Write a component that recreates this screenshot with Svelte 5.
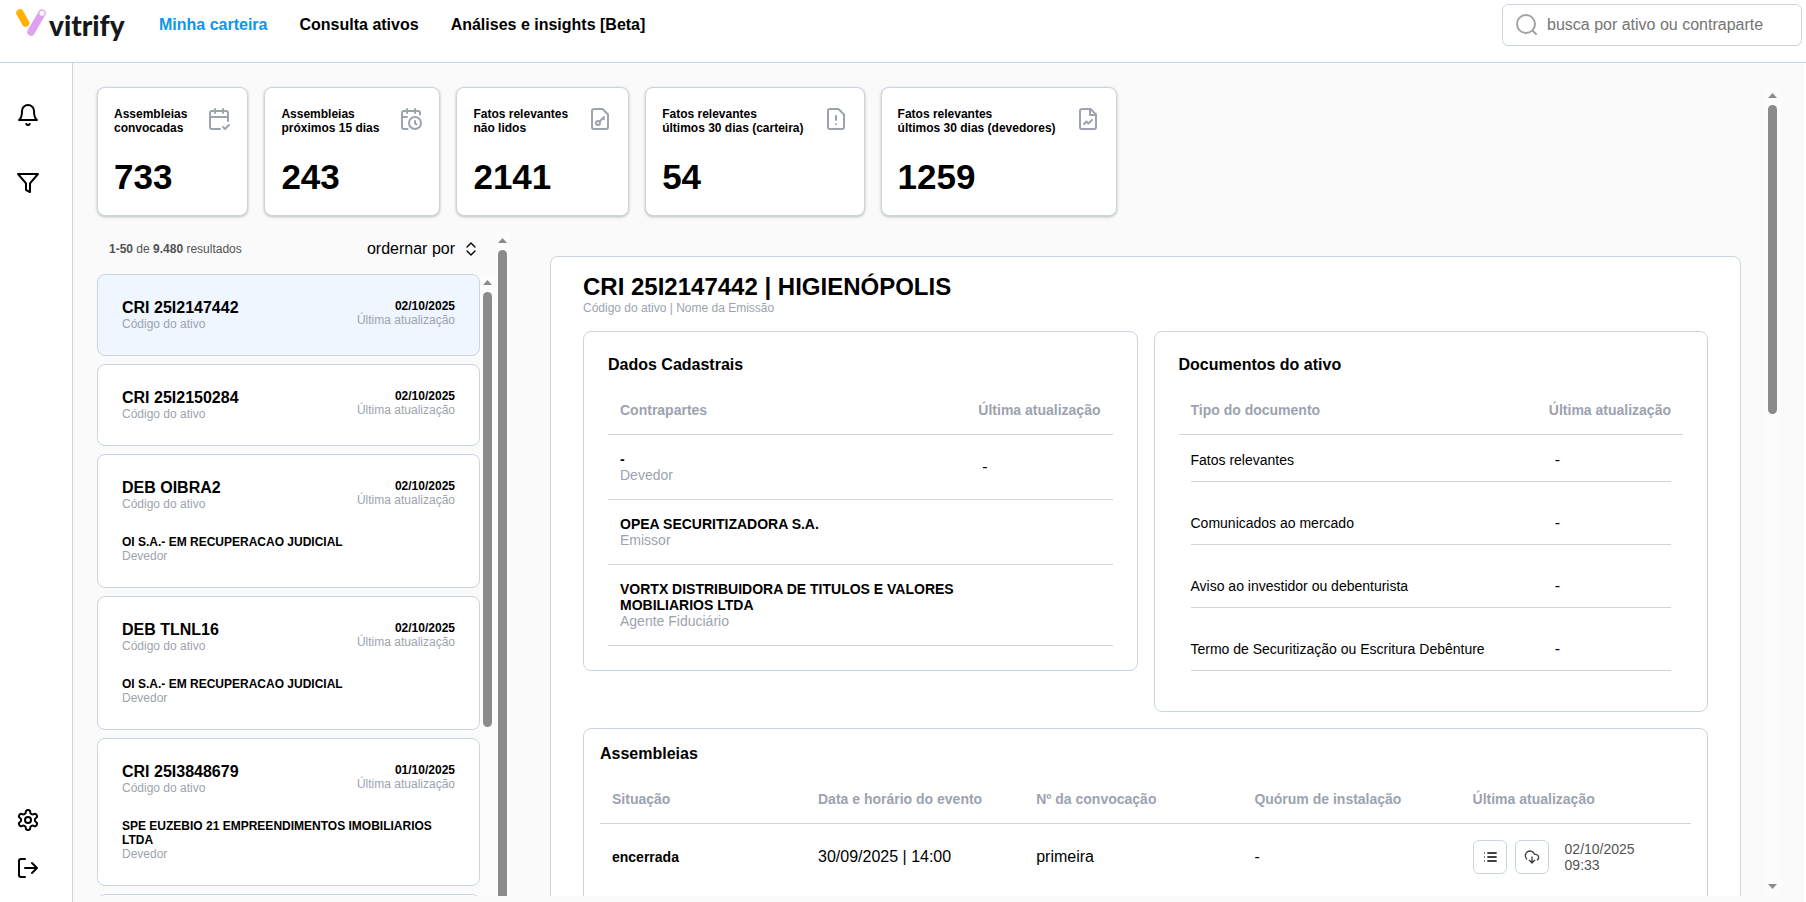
<script>
  const stats = [
    { icon: 'check', top: 'Assembleias', bottom: 'convocadas', value: '733' },
    { icon: 'clock', top: 'Assembleias', bottom: 'próximos 15 dias', value: '243' },
    { icon: 'key', top: 'Fatos relevantes', bottom: 'não lidos', value: '2141' },
    { icon: 'warning', top: 'Fatos relevantes', bottom: 'últimos 30 dias (carteira)', value: '54' },
    { icon: 'chart', top: 'Fatos relevantes', bottom: 'últimos 30 dias (devedores)', value: '1259' }
  ];

  const assets = [
    { code: 'CRI 25I2147442', date: '02/10/2025' },
    { code: 'CRI 25I2150284', date: '02/10/2025' },
    { code: 'DEB OIBRA2', date: '02/10/2025', debtor: 'OI S.A.- EM RECUPERACAO JUDICIAL' },
    { code: 'DEB TLNL16', date: '02/10/2025', debtor: 'OI S.A.- EM RECUPERACAO JUDICIAL' },
    { code: 'CRI 25I3848679', date: '01/10/2025', debtor: 'SPE EUZEBIO 21 EMPREENDIMENTOS IMOBILIARIOS LTDA' }
  ];

  const parties = [
    { name: '-', role: 'Devedor', updated: '-' },
    { name: 'OPEA SECURITIZADORA S.A.', role: 'Emissor', updated: '' },
    { name: 'VORTX DISTRIBUIDORA DE TITULOS E VALORES MOBILIARIOS LTDA', role: 'Agente Fiduciário', updated: '' }
  ];

  const documents = [
    'Fatos relevantes',
    'Comunicados ao mercado',
    'Aviso ao investidor ou debenturista',
    'Termo de Securitização ou Escritura Debênture'
  ];

  let selected = $state(0);
</script>

{#snippet scrollbar(size, end = true)}
  <div class="scrollbar" aria-hidden="true">
    <svg class="arrow" viewBox="0 0 15 18"><path d="M3 11 7.500 6 12 11z" /></svg>
    <div class="rail"><div class="thumb" style="height: {size}%"></div></div>
    {#if end}
      <svg class="arrow" viewBox="0 0 15 18"><path d="M3 6 7.500 11 12 6z" /></svg>
    {/if}
  </div>
{/snippet}

<div class="app">
  <header class="topbar">
    <a class="logo" href="#inicio">
      <svg width="34" height="32" viewBox="0 0 34 32" aria-hidden="true">
        <path d="M5 4 10.500 14" stroke="#ffb000" stroke-width="7.500" stroke-linecap="round" />
        <path d="M16 23 27 4.200" stroke="#e0a0f0" stroke-width="7.500" stroke-linecap="round" />
        <circle cx="27" cy="4.200" r="2.500" fill="#fff" />
      </svg>
      <span>vitrify</span>
    </a>
    <nav>
      <a class="active" href="#carteira">Minha carteira</a>
      <a href="#consulta">Consulta ativos</a>
      <a href="#analises">Análises e insights [Beta]</a>
    </nav>
    <label class="search">
      <svg class="icon" viewBox="0 0 24 24" aria-hidden="true"><circle cx="11" cy="11" r="9" /><path d="m21 21-3.500-3.500" /></svg>
      <input type="search" placeholder="busca por ativo ou contraparte" aria-label="busca por ativo ou contraparte" />
    </label>
  </header>

  <div class="body">
    <aside class="sidebar">
      <div class="tools">
        <button aria-label="Notificações">
          <svg class="icon" viewBox="0 0 24 24"><path d="M6 8a6 6 0 0 1 12 0c0 7 3 9 3 9H3s3-2 3-9" /><path d="M10.300 21a1.940 1.940 0 0 0 3.400 0" /></svg>
        </button>
        <button aria-label="Filtros">
          <svg class="icon" viewBox="0 0 24 24"><path d="M22 3H2l8 9.460V19l4 2v-8.540z" /></svg>
        </button>
      </div>
      <div class="tools lower">
        <button aria-label="Configurações">
          <svg class="icon" viewBox="0 0 24 24"><path d="M12.220 2h-.440a2 2 0 0 0-2 2v.180a2 2 0 0 1-1 1.730l-.430.250a2 2 0 0 1-2 0l-.150-.080a2 2 0 0 0-2.730.730l-.220.380a2 2 0 0 0 .730 2.730l.150.100a2 2 0 0 1 1 1.720v.510a2 2 0 0 1-1 1.740l-.150.090a2 2 0 0 0-.730 2.730l.220.380a2 2 0 0 0 2.730.730l.150-.080a2 2 0 0 1 2 0l.430.250a2 2 0 0 1 1 1.730V20a2 2 0 0 0 2 2h.440a2 2 0 0 0 2-2v-.180a2 2 0 0 1 1-1.730l.430-.250a2 2 0 0 1 2 0l.150.080a2 2 0 0 0 2.730-.730l.220-.390a2 2 0 0 0-.730-2.730l-.150-.080a2 2 0 0 1-1-1.740v-.500a2 2 0 0 1 1-1.740l.150-.090a2 2 0 0 0 .730-2.730l-.220-.380a2 2 0 0 0-2.730-.730l-.150.080a2 2 0 0 1-2 0l-.430-.250a2 2 0 0 1-1-1.730V4a2 2 0 0 0-2-2z" /><circle cx="12" cy="12" r="3" /></svg>
        </button>
        <button aria-label="Sair">
          <svg class="icon" viewBox="0 0 24 24"><path d="M9 21H5a2 2 0 0 1-2-2V5a2 2 0 0 1 2-2h4M16 17l5-5-5-5M21 12H9" /></svg>
        </button>
      </div>
    </aside>

    <main>
      <div class="content">
        <section class="stats">
          {#each stats as stat}
            <article class="stat">
              <div class="stat-head">
                <h2>{stat.top}<br />{stat.bottom}</h2>
                <svg class="icon" viewBox="0 0 24 24" aria-hidden="true">
                  {#if stat.icon === 'check'}
                    <path d="M8 2v4M16 2v4M21 14V6a2 2 0 0 0-2-2H5a2 2 0 0 0-2 2v14a2 2 0 0 0 2 2h8M3 10h18M16 20l2 2 4-4" />
                  {:else if stat.icon === 'clock'}
                    <path d="M21 7.500V6a2 2 0 0 0-2-2H5a2 2 0 0 0-2 2v14a2 2 0 0 0 2 2h3.500M16 2v4M8 2v4M3 10h5M17.500 17.500 16 16.300V14" />
                    <circle cx="16" cy="16" r="6" />
                  {:else if stat.icon === 'chart'}
                    <path d="M14.500 2H6a2 2 0 0 0-2 2v16a2 2 0 0 0 2 2h12a2 2 0 0 0 2-2V7.500zM14 2v6h6M16 13l-3.500 3.500-2-2L8 17" />
                  {:else}
                    <path d="M14.500 2H6a2 2 0 0 0-2 2v16a2 2 0 0 0 2 2h12a2 2 0 0 0 2-2V7.500z" />
                    {#if stat.icon === 'key'}
                      <circle cx="10" cy="16" r="2" />
                      <path d="m16 10-4.500 4.500M15 11l1 1" />
                    {:else}
                      <path d="M12 9v4M12 17h.010" />
                    {/if}
                  {/if}
                </svg>
              </div>
              <p>{stat.value}</p>
            </article>
          {/each}
        </section>

        <div class="columns">
          <section class="list">
            <div class="list-main">
              <div class="list-head">
                <p><b>1-50</b> de <b>9.480</b> resultados</p>
                <button>
                  ordernar por
                  <svg class="icon small" viewBox="0 0 24 24" aria-hidden="true"><path d="m6 15 6 6 6-6M6 9l6-6 6 6" /></svg>
                </button>
              </div>
              <div class="list-body">
                <div class="items">
                  {#each assets as asset, i}
                    <button class="item" class:selected={selected === i} onclick={() => (selected = i)}>
                      <span class="item-top">
                        <span><strong class="code">{asset.code}</strong><small>Código do ativo</small></span>
                        <span class="when"><strong>{asset.date}</strong><small>Última atualização</small></span>
                      </span>
                      {#if asset.debtor}
                        <span><strong>{asset.debtor}</strong><small>Devedor</small></span>
                      {/if}
                    </button>
                  {/each}
                  <div class="item"></div>
                </div>
                {@render scrollbar(72, false)}
              </div>
            </div>
            {@render scrollbar(110, false)}
          </section>

          <section class="detail">
            <h1>CRI 25I2147442 | HIGIENÓPOLIS</h1>
            <small>Código do ativo | Nome da Emissão</small>

            <div class="panels">
              <section class="panel">
                <h3>Dados Cadastrais</h3>
                <table>
                  <thead>
                    <tr><th>Contrapartes</th><th class="fit">Última atualização</th></tr>
                  </thead>
                  <tbody>
                    {#each parties as party}
                      <tr class="party">
                        <td><strong>{party.name}</strong><span>{party.role}</span></td>
                        <td class="dash">{party.updated}</td>
                      </tr>
                    {/each}
                  </tbody>
                </table>
              </section>

              <section class="panel">
                <h3>Documentos do ativo</h3>
                <table>
                  <thead>
                    <tr><th>Tipo do documento</th><th class="fit">Última atualização</th></tr>
                  </thead>
                  <tbody>
                    {#each documents as name}
                      <tr class="doc">
                        <td><div>{name}</div></td>
                        <td><div>-</div></td>
                      </tr>
                    {/each}
                  </tbody>
                </table>
              </section>
            </div>

            <section class="panel meetings">
              <h3>Assembleias</h3>
              <table>
                <colgroup><col class="first" /><col /><col /><col /><col class="last" /></colgroup>
                <thead>
                  <tr><th>Situação</th><th>Data e horário do evento</th><th>Nº da convocação</th><th>Quórum de instalação</th><th>Última atualização</th></tr>
                </thead>
                <tbody>
                  <tr>
                    <td><strong>encerrada</strong></td>
                    <td>30/09/2025 | 14:00</td>
                    <td>primeira</td>
                    <td>-</td>
                    <td>
                      <div class="actions">
                        <button aria-label="Detalhes">
                          <svg class="icon small list-icon" viewBox="0 0 24 24"><path d="M8 6h14M8 12h14M8 18h14M3 6h1M3 12h1M3 18h1" /></svg>
                        </button>
                        <button aria-label="Baixar">
                          <svg class="icon small" viewBox="0 0 24 24"><path d="M4 14.899A7 7 0 1 1 15.710 8h1.790a4.500 4.500 0 0 1 2.500 8.242M12 12v9M8 17l4 4 4-4" /></svg>
                        </button>
                        <time>02/10/2025<br />09:33</time>
                      </div>
                    </td>
                  </tr>
                </tbody>
              </table>
            </section>
          </section>
        </div>
      </div>
      {@render scrollbar(40)}
    </main>
  </div>
</div>

<style>
  :global(body) {
    margin: 0;
    overflow: hidden;
  }

  .app {
    --line: #cbd5e1;
    --rule: #d1d5db;
    --muted: #9ca3af;
    display: flex;
    flex-direction: column;
    height: 100vh;
    color: #000;
    background: #fff;
    font: 16px/18px 'Liberation Sans', Arial, sans-serif;
  }

  .app :is(h1, h2, h3, p) {
    margin: 0;
  }

  .app :is(*, *::before) {
    box-sizing: border-box;
  }

  button {
    padding: 0;
    border: 0;
    background: none;
    color: inherit;
    font: inherit;
    cursor: pointer;
  }

  a {
    color: inherit;
    text-decoration: none;
  }

  small {
    display: block;
    color: var(--muted);
    font-size: 12px;
    line-height: 14px;
  }

  .icon {
    display: block;
    flex: none;
    width: 24px;
    height: 24px;
    fill: none;
    stroke: currentColor;
    stroke-width: 2;
    stroke-linecap: round;
    stroke-linejoin: round;
  }

  .icon.small {
    width: 16px;
    height: 16px;
  }

  .icon.list-icon {
    stroke-width: 3;
    stroke-linecap: butt;
  }

  .topbar {
    display: flex;
    align-items: center;
    padding: 4px 4px 16px 15px;
    border-bottom: 1px solid var(--line);
  }

  .logo {
    display: flex;
    align-items: center;
    width: 144px;
    color: #18181b;
    font: 900 28px/36px Lato, sans-serif;
  }

  .logo svg {
    fill: none;
  }

  nav {
    display: flex;
    flex: 1;
    gap: 32px;
    font-weight: bold;
  }

  nav .active {
    color: #0c96ec;
  }

  .search {
    display: flex;
    align-items: center;
    gap: 8px;
    width: 300px;
    height: 42px;
    padding: 0 12px;
    border: 1px solid var(--line);
    border-radius: 6px;
    color: #a3a3a3;
  }

  .search input {
    flex: 1;
    min-width: 0;
    padding: 0;
    border: 0;
    outline: 0;
    background: none;
    font: inherit;
  }

  .search input::placeholder {
    color: #757575;
  }

  .body {
    display: flex;
    flex: 1;
    min-height: 0;
  }

  .sidebar {
    display: flex;
    flex-direction: column;
    justify-content: space-between;
    width: 73px;
    padding: 40px 16px 22px;
    border-right: 1px solid var(--line);
  }

  .tools {
    display: flex;
    flex-direction: column;
    align-items: flex-start;
    gap: 44px;
  }

  .tools.lower {
    gap: 24px;
  }

  main {
    display: flex;
    flex: 1;
    min-width: 0;
    margin-right: 2px;
    padding: 24px 24px 6px;
    background: #fafafa;
  }

  .content {
    display: flex;
    flex: 1;
    flex-direction: column;
    gap: 16px;
    min-width: 0;
  }

  .scrollbar {
    display: flex;
    flex: none;
    flex-direction: column;
    width: 15px;
    overflow: hidden;
    background: #fcfcfc;
  }

  .arrow {
    flex: none;
    height: 18px;
    fill: #8b8b8b;
  }

  .rail {
    flex: 1;
    min-height: 0;
  }

  .thumb {
    width: 9px;
    margin: 0 auto;
    border-radius: 5px;
    background: #8b8b8b;
  }

  .stats {
    display: flex;
    gap: 16px;
  }

  .stat {
    padding: 19px 16px 17px;
    border: 1px solid var(--line);
    border-radius: 8px;
    background: #fff;
    box-shadow: 0 1px 3px rgba(0, 0, 0, 0.25);
  }

  .stat-head {
    display: flex;
    gap: 20px;
    color: var(--muted);
  }

  .stat h2 {
    flex: 1;
    color: #000;
    font-size: 12px;
    line-height: 14px;
    white-space: nowrap;
  }

  .stat p {
    margin-top: 21px;
    font-size: 35px;
    font-weight: bold;
    line-height: 42px;
  }

  .columns {
    display: flex;
    flex: 1;
    gap: 40px;
    min-height: 0;
    overflow: hidden;
  }

  .list {
    display: flex;
    flex: none;
    width: 413px;
  }

  .list-main {
    display: flex;
    flex: 1;
    flex-direction: column;
    min-width: 0;
  }

  .list-head {
    display: flex;
    align-items: center;
    justify-content: space-between;
    height: 42px;
    padding: 0 16px 8px 12px;
  }

  .list-head p {
    color: #525252;
    font-size: 12px;
  }

  .list-head button {
    display: flex;
    align-items: center;
    gap: 8px;
    height: 18px;
  }

  .list-body {
    display: flex;
    flex: 1;
    min-height: 0;
  }

  .items {
    display: flex;
    flex: 1;
    flex-direction: column;
    gap: 8px;
    min-width: 0;
    overflow: hidden;
  }

  .item {
    display: flex;
    flex: none;
    flex-direction: column;
    gap: 24px;
    padding: 24px;
    border: 1px solid var(--line);
    border-radius: 8px;
    background: #fff;
    text-align: left;
  }

  .item.selected {
    background: #eff6ff;
  }

  .item strong {
    display: block;
    font-size: 12px;
    line-height: 14px;
  }

  .item .code {
    font-size: 16px;
    line-height: 18px;
  }

  .item-top {
    display: flex;
    justify-content: space-between;
    width: 100%;
  }

  .when {
    text-align: right;
  }

  .detail {
    flex: 1;
    align-self: flex-start;
    min-width: 0;
    margin: 24px 24px 0 0;
    padding: 16px 32px 32px;
    border: 1px solid var(--line);
    border-radius: 8px;
    background: #fff;
  }

  h1 {
    font-size: 24px;
    line-height: 28px;
  }

  h3 {
    font-size: 16px;
    line-height: 18px;
  }

  .panels {
    display: grid;
    grid-template-columns: 1fr 1fr;
    align-items: start;
    gap: 16px;
    margin: 16px 0;
  }

  .panel {
    padding: 24px;
    border: 1px solid var(--line);
    border-radius: 8px;
  }

  .meetings {
    padding: 16px;
  }

  table {
    width: 100%;
    margin-top: 12px;
    border-collapse: separate;
    border-spacing: 0;
    text-align: left;
  }

  th {
    height: 49px;
    padding: 0 12px;
    border-bottom: 1px solid var(--rule);
    color: var(--muted);
    font-size: 14px;
    line-height: 16px;
    white-space: nowrap;
  }

  .fit {
    width: 1px;
  }

  td {
    padding: 16px 12px;
  }

  .party td {
    border-bottom: 1px solid var(--rule);
    font-size: 14px;
    line-height: 16px;
  }

  .party :is(strong, span) {
    display: block;
  }

  .party span {
    color: var(--muted);
  }

  .party .dash {
    padding-left: 16px;
    font-size: 16px;
  }

  .doc td {
    padding: 0 0 16px 12px;
  }

  .doc td:last-child {
    padding: 0 12px 16px 0;
  }

  .doc div {
    padding: 16px 0 12px;
    border-bottom: 1px solid var(--rule);
    font-size: 14px;
  }

  .doc td:last-child div {
    padding-left: 18px;
    font-size: 16px;
  }

  .meetings table {
    table-layout: fixed;
  }

  .meetings col {
    width: 20%;
  }

  .meetings .first {
    width: 206px;
  }

  .meetings .last {
    width: auto;
  }

  .meetings strong {
    font-size: 14px;
  }

  .actions {
    display: flex;
    align-items: center;
    gap: 8px;
  }

  .actions button {
    display: grid;
    place-items: center;
    width: 34px;
    height: 34px;
    border: 1px solid var(--line);
    border-radius: 6px;
    color: #404040;
  }

  .actions time {
    margin-left: 8px;
    color: #525252;
    font-size: 14px;
    line-height: 16px;
  }
</style>
